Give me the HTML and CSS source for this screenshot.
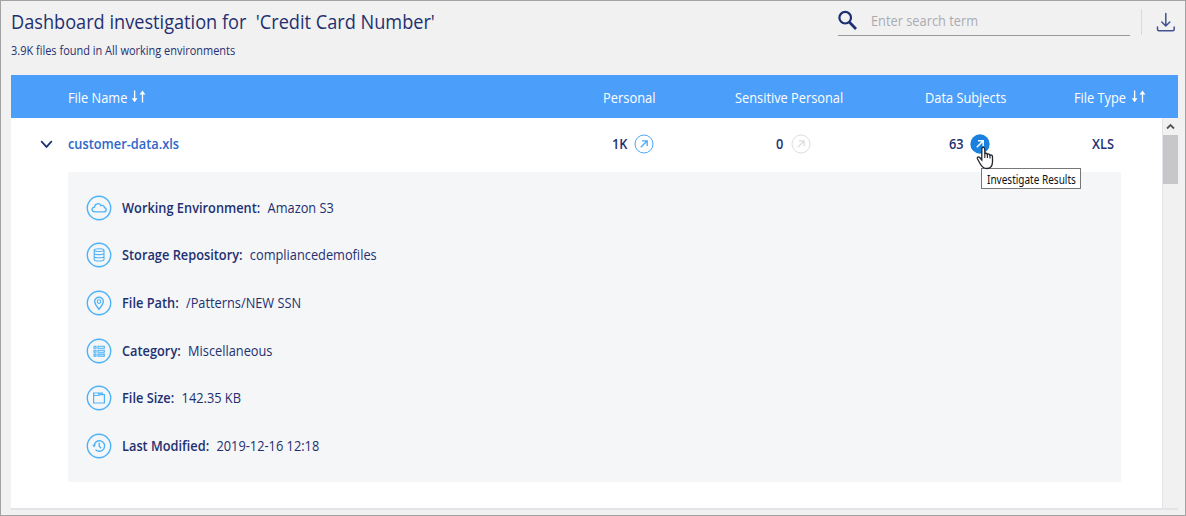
FILE: index.html
```
<!DOCTYPE html>
<html lang="en">
<head>
<meta charset="utf-8">
<title>Dashboard investigation</title>
<link rel="stylesheet" href="styles.css">
</head>
<body>
<main class="page">
  <header class="top">
    <div class="heading">
      <h1 class="title"><span class="fit">Dashboard investigation for &nbsp;'Credit Card Number'</span></h1>
      <p class="subtitle"><span class="fit">3.9K files found in All working environments</span></p>
    </div>
    <div class="tools">
      <div class="search">
        <svg class="search-icon" width="20" height="21" viewBox="0 0 20 21"><circle cx="7.2" cy="7.7" r="5.8" fill="none" stroke="#1c2f73" stroke-width="2.2"/><path d="M11.5 12.2L18 19" stroke="#1c2f73" stroke-width="2.7"/></svg>
        <span class="placeholder"><span class="fit">Enter search term</span></span>
      </div>
      <span class="divider"></span>
      <svg class="download" width="20" height="20" viewBox="0 0 20 20" fill="none" stroke="#405292" stroke-width="1.5" stroke-linecap="round" stroke-linejoin="round"><path d="M9.8 1.5V13.8M5.8 10L9.8 14L13.8 10M1.5 15V17.2Q1.5 18.7 3 18.7H16.7Q18.2 18.7 18.2 17.2V15"/></svg>
    </div>
  </header>

  <section class="table">
    <div class="thead cols">
      <span class="cell-name"><span class="fit">File Name</span>
        <svg class="sort" width="15" height="13" viewBox="0 0 15 13"><path d="M3.6 .5V9M11.5 4V12.5" stroke="#fff" stroke-width="1.3"/><path d="M.7 8.3H6.5L3.6 12.3ZM8.6 4.5H14.4L11.5 .5Z" fill="#fff"/></svg></span>
      <span class="cell-personal"><span class="fit">Personal</span></span>
      <span class="cell-sensitive"><span class="fit">Sensitive Personal</span></span>
      <span class="cell-subjects"><span class="fit">Data Subjects</span></span>
      <span class="cell-type"><span class="fit">File Type</span>
        <svg class="sort" width="15" height="13" viewBox="0 0 15 13"><path d="M3.6 .5V9M11.5 4V12.5" stroke="#fff" stroke-width="1.3"/><path d="M.7 8.3H6.5L3.6 12.3ZM8.6 4.5H14.4L11.5 .5Z" fill="#fff"/></svg></span>
    </div>
    <div class="tbody">
      <div class="content">
        <div class="row cols">
          <svg class="chevron" width="13" height="9" viewBox="0 0 13 9"><path d="M1.2 1.2L6.5 6.9L11.8 1.2" fill="none" stroke="#1c2f73" stroke-width="1.7"/></svg>
          <span class="cell-name filename"><span class="fit">customer-data.xls</span></span>
          <span class="cell-personal value"><span class="fit">1K</span>
            <svg class="go" width="20" height="20" viewBox="0 0 20 20" fill="none" stroke="#4da6f8"><circle cx="10" cy="10" r="9"/><path d="M6.8 13.2L13 7M8 6.8H13.2V12" stroke-width="1.3"/></svg></span>
          <span class="cell-sensitive value"><span class="fit">0</span>
            <svg class="go" width="20" height="20" viewBox="0 0 20 20" fill="none" stroke="#dedede"><circle cx="10" cy="10" r="9"/><path d="M6.8 13.2L13 7M8 6.8H13.2V12" stroke-width="1.3"/></svg></span>
          <span class="cell-subjects value"><span class="fit">63</span>
            <span class="go hovered">
              <svg width="20" height="20" viewBox="0 0 20 20" fill="none" stroke="#fff"><circle cx="10" cy="10" r="9.7" fill="#1a82dc" stroke="none"/><path d="M6.8 13.2L13 7M8 6.8H13.2V12" stroke-width="1.5"/></svg>
              <svg class="cursor" width="18" height="24" viewBox="0 0 18 24"><path d="M5.8 14V3.2C5.8 .7 8.8 .7 8.8 3.2V8.1C9.1 6.8 11.3 7 11.4 8.5C12 7.6 13.9 7.9 14 9.3C14.8 8.6 16.5 9.1 16.5 10.7V15.8C16.5 20.2 14 22.5 10.8 22.5C6.8 22.5 5.4 20.1 3.9 17.2L1.4 12.7C.7 11.2 2.6 10.2 3.7 11.5Z" fill="#fff" stroke="#24262e" stroke-width="1.3"/><path d="M8.8 8V12M11.4 8.5V12M14 9.3V12.4" stroke="#24262e" stroke-width="1.1"/></svg>
              <span class="tooltip"><span class="fit">Investigate Results</span></span>
            </span></span>
          <span class="cell-type value"><span class="fit">XLS</span></span>
        </div>
        <div class="details">
          <div class="detail">
            <svg class="badge" viewBox="0 0 26 26"><circle class="ring" cx="13" cy="13" r="11.7"/><path d="M9 16.8C5.2 16.8 5 12.3 8.5 12.2C8.7 8.3 13.5 7.6 14.8 10.6C17.2 9.8 18.5 11.2 18.3 12.6C21 13 20.8 16.8 18 16.8Z" stroke-width="1.3"/></svg>
            <span class="fit"><b>Working Environment:</b>Amazon S3</span></div>
          <div class="detail">
            <svg class="badge" viewBox="0 0 26 26"><circle class="ring" cx="13" cy="13" r="11.7"/><path d="M8.2 8.1V17.5C8.2 19.5 18 19.5 18 17.5V8.1M8.2 8.1C8.2 6.2 18 6.2 18 8.1C18 10 8.2 10 8.2 8.1M8.2 11.3C8.2 13.1 18 13.1 18 11.3M8.2 14.4C8.2 16.2 18 16.2 18 14.4"/></svg>
            <span class="fit"><b>Storage Repository:</b>compliancedemofiles</span></div>
          <div class="detail">
            <svg class="badge" viewBox="0 0 26 26"><circle class="ring" cx="13" cy="13" r="11.7"/><path d="M13 19.3C10.5 16.2 8.7 13.8 8.7 11.5A4.3 4.3 0 0 1 17.3 11.5C17.3 13.8 15.5 16.2 13 19.3Z" stroke-width="1.4"/><circle cx="13" cy="11.6" r="1.8"/></svg>
            <span class="fit"><b>File Path:</b>/Patterns/NEW SSN</span></div>
          <div class="detail">
            <svg class="badge" viewBox="0 0 26 26"><circle class="ring" cx="13" cy="13" r="11.7"/><path d="M8 8.3H10V10.3H8ZM12 8.3H18.3V10.3H12ZM8 12.2H10V14.2H8ZM12 12.2H18.3V14.2H12ZM8 16.1H10V18.1H8ZM12 16.1H18.3V18.1H12Z"/></svg>
            <span class="fit"><b>Category:</b>Miscellaneous</span></div>
          <div class="detail">
            <svg class="badge" viewBox="0 0 26 26"><circle class="ring" cx="13" cy="13" r="11.7"/><path d="M7.6 18V8H12.2L13.5 9.7H18.4V18ZM7.6 10.5H12.5L13.7 9.7M16.4 9.5V8.2H12.5" stroke-width="1.2"/></svg>
            <span class="fit"><b>File Size:</b>142.35 KB</span></div>
          <div class="detail">
            <svg class="badge" viewBox="0 0 26 26"><circle class="ring" cx="13" cy="13" r="11.7"/><path d="M8.1 13.1A5.3 5.3 0 1 1 9.5 16.6M13.2 9.8V13.3L15.2 15.2" stroke-width="1.4"/><path d="M6.2 11.8H10L8.1 14.4Z" fill="#4db2f7" stroke="none"/></svg>
            <span class="fit"><b>Last Modified:</b>2019-12-16 12:18</span></div>
        </div>
      </div>
      <div class="scrollbar">
        <svg width="15" height="17" viewBox="0 0 15 17"><path d="M4 10.5L7.5 7L11 10.5" fill="none" stroke="#555" stroke-width="1.8"/></svg>
        <div class="thumb"></div>
      </div>
    </div>
  </section>
</main>
</body>
</html>
```
FILE: styles.css
```
* { box-sizing: border-box; }
body { margin: 0; }
.page { width: 1186px; height: 516px; border: 1px solid #a3a3a3; background: #f1f1f2; padding: 0 7px 0 10px; overflow: hidden; font: 14px/20px "Open Sans", sans-serif; color: #1f3070; }
.fit { display: inline-block; white-space: nowrap; transform: scaleX(.914); transform-origin: left center; }
.top { height: 74px; display: flex; justify-content: space-between; }
.title { margin: 7px 0 0; font-size: 20px; line-height: 28px; font-weight: 400; }
.title .fit { transform: scaleX(.908); }
.subtitle { margin: 7px 0 0; font-size: 12px; line-height: 16px; }
.tools { display: flex; align-items: flex-start; padding-right: 2px; }
.search { width: 292px; height: 35px; margin-right: 11px; border-bottom: 1px solid #999; display: flex; align-items: flex-start; }
.search-icon { margin-top: 9px; }
.placeholder { margin: 10px 0 0 13px; color: #aaabb0; }
.divider { width: 1px; height: 26px; margin: 8px 14px 0 0; background: #d9d9d9; }
.download { margin-top: 11px; }
.cols { display: grid; grid-template-columns: 57px 535px 132px 190px 149px 1fr; align-items: center; }
.thead { height: 43px; padding-top: 2px; background: #4c9efb; color: #fff; }
.cell-name { grid-column: 2; display: flex; align-items: center; }
.cell-personal { grid-column: 3; }
.cell-sensitive { grid-column: 4; }
.cell-subjects { grid-column: 5; }
.cell-type { grid-column: 6; display: flex; align-items: center; }
.sort { margin: 0 0 3px -2px; }
.cell-type .sort { margin-left: 0; }
.tbody { height: 392px; display: flex; background: #fff; border-bottom: 2px solid #e5e2e8; }
.content { width: 1152px; border-right: 1px solid #e4e4e8; }
.row { position: relative; height: 54px; padding-bottom: 2px; }
.chevron { grid-column: 1; margin-left: 29px; }
.filename { color: #2f66c9; font-weight: 600; }
.value { font-weight: 600; display: flex; align-items: center; }
.thead .cell-personal .fit { transform: scaleX(.92); }
.value.cell-personal { padding-left: 9px; }
.value.cell-sensitive { padding-left: 41px; }
.value.cell-subjects { padding-left: 24px; }
.value.cell-type { padding-left: 18px; }
.go { margin-left: 5px; flex: none; }
.value.cell-sensitive .go { margin-left: 7px; }
.hovered { position: relative; width: 20px; height: 20px; }
.hovered svg { display: block; }
.cursor { position: absolute; left: 6px; top: 12px; z-index: 2; }
.tooltip { position: absolute; left: 11px; top: 34px; width: 100px; height: 21px; border: 1px solid #777; background: #fff; color: #111; font: 400 12px/21px "Noto Sans", sans-serif; padding-left: 5px; }
.tooltip .fit { display: block; transform: scaleX(.835); }
.details { margin-left: 57px; width: 1053px; height: 310px; background: #f4f6f8; padding: 12px 0 0 17.5px; }
.detail { display: flex; align-items: center; gap: 10.5px; height: 47.6px; }
.detail b { font-weight: 600; margin-right: 8px; }
.badge { width: 26px; height: 26px; fill: none; stroke: #4db2f7; stroke-width: 1.1; }
.ring { stroke-width: 1.4; }
.scrollbar { width: 15px; background: #f1f1f2; }
.scrollbar svg { display: block; }
.thumb { height: 49px; background: #c7c6c9; }
```
